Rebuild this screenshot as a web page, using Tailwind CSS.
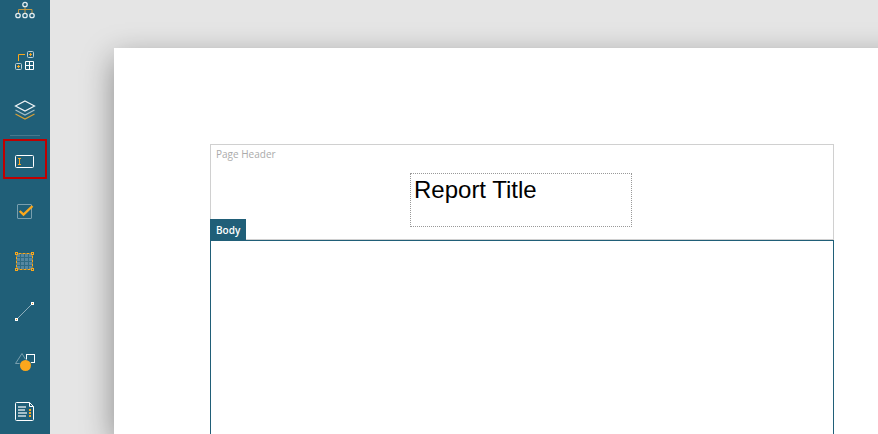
<!DOCTYPE html>
<html lang="en">
<head>
    <meta charset="UTF-8">
    <meta name="viewport" content="width=device-width, initial-scale=1.0">
    <title>Report Designer</title>
    <script src="https://cdn.jsdelivr.net/npm/@tailwindcss/browser@4"></script>
</head>
<body class="flex h-screen overflow-hidden bg-[#e5e5e5] font-['Open_Sans',sans-serif]">
    <!-- Toolbox, scrolled down slightly -->
    <nav aria-label="Toolbox" class="w-[50px] shrink-0 overflow-hidden bg-[#205f78]">
        <div class="-mt-[15px] flex flex-col">
            <button type="button" aria-label="Hierarchy" class="flex h-[50px] items-center justify-center">
                <svg class="size-6" viewBox="0 0 24 24" fill="none">
                    <path d="M12 9v6M5.500 15v-3.500h13.500v3.500" stroke="#c39a45"/>
                    <g stroke="#e3edf1" stroke-width="1.300">
                        <circle cx="12" cy="6.500" r="2.200"/>
                        <circle cx="5" cy="17.500" r="2.200"/>
                        <circle cx="12" cy="17.500" r="2.200"/>
                        <circle cx="19" cy="17.500" r="2.200"/>
                    </g>
                </svg>
            </button>
            <button type="button" aria-label="Tablix" class="flex h-[50px] items-center justify-center">
                <svg class="size-6" viewBox="0 0 24 24" fill="none">
                    <path d="M5.500 13V6.500H12" stroke="#faa71c"/>
                    <g stroke="#bcd0d8">
                        <rect x="14.500" y="3.500" width="6" height="6" rx="1"/>
                        <rect x="2.500" y="15.500" width="6" height="6" rx="1"/>
                    </g>
                    <path d="M16 6.500h3M17.500 5v3M4 18.500h3M5.500 17v3" stroke="#faa71c"/>
                    <path d="M12.500 13.500h8v8h-8zM16.500 13.500v8M12.500 17.500h8" stroke="#fff"/>
                </svg>
            </button>
            <button type="button" aria-label="Layers" class="flex h-[50px] items-center justify-center">
                <svg class="size-6" viewBox="0 0 24 24" fill="none" stroke-width="1.200">
                    <path d="M2.500 16l9.500 5 9.500-5" stroke="#d9a136"/>
                    <path d="M2.500 12l9.500 5 9.500-5" stroke="#a5bfca"/>
                    <path d="M12 3l9.500 5-9.500 5-9.500-5z" stroke="#f2f6f8"/>
                </svg>
            </button>
            <hr class="mx-[10px] border-t border-[#47798e]">
            <button type="button" aria-label="Text Box" class="relative flex h-[50px] items-center justify-center">
                <svg class="size-6" viewBox="0 0 24 24" fill="none">
                    <rect x="2.500" y="6.500" width="18" height="12" rx="1" stroke="#fff"/>
                    <path d="M5 9.500h3M6.500 9v7M5 15.500h3" stroke="#faa71c"/>
                </svg>
                <span class="absolute inset-x-[3px] top-[3px] bottom-[7px] border-2 border-[#c00000]"></span>
            </button>
            <button type="button" aria-label="Check Box" class="flex h-[50px] items-center justify-center">
                <svg class="size-6" viewBox="0 0 24 24" fill="none">
                    <rect x="4.500" y="5.500" width="14" height="14" rx="0.500" stroke="#799fae"/>
                    <path d="M6.700 12l3.800 3.600 9-8.600" stroke="#faa71c" stroke-width="2.400"/>
                </svg>
            </button>
            <button type="button" aria-label="Table" class="flex h-[50px] items-center justify-center">
                <svg class="size-6" viewBox="0 0 24 24" fill="none">
                    <rect x="4" y="5" width="15" height="15" fill="#5687a0"/>
                    <path d="M7.500 5v15M11.500 5v15M15.500 5v15M4 8.500h15M4 12.500h15M4 16.500h15" stroke="#2f6b83"/>
                    <rect x="3.500" y="4.500" width="16" height="16" stroke="#faa71c" stroke-dasharray="3 1" stroke-dashoffset="-2"/>
                    <g stroke="#faa71c" fill="#205f78">
                        <rect x="2.500" y="3.500" width="2" height="2"/>
                        <rect x="18.500" y="3.500" width="2" height="2"/>
                        <rect x="2.500" y="19.500" width="2" height="2"/>
                        <rect x="18.500" y="19.500" width="2" height="2"/>
                    </g>
                </svg>
            </button>
            <button type="button" aria-label="Line" class="flex h-[50px] items-center justify-center">
                <svg class="size-6" viewBox="0 0 24 24" fill="none">
                    <path d="M3.500 20.500l16-16" stroke="#90afbc"/>
                    <path d="M18 3h3v3h-3zM2 19h3v3h-3z" fill="#fff"/>
                    <path d="M19 4h1v1h-1zM3 20h1v1h-1z" fill="#e08a1c"/>
                </svg>
            </button>
            <button type="button" aria-label="Shape" class="flex h-[50px] items-center justify-center">
                <svg class="size-6" viewBox="0 0 24 24" fill="none">
                    <path d="M9 4.500l6 10H2.500z" stroke="#799fae"/>
                    <rect x="13.500" y="5.500" width="8" height="8" fill="#205f78" stroke="#fff"/>
                    <circle cx="12.500" cy="16.500" r="6.200" fill="#205f78"/>
                    <circle cx="12.500" cy="16.500" r="5.500" fill="#faa71c"/>
                </svg>
            </button>
            <button type="button" aria-label="Table of Contents" class="flex h-[50px] items-center justify-center">
                <svg class="size-6" viewBox="0 0 24 24" fill="none">
                    <path d="M16.500 3.500h-13q-1 0-1 1v16q0 1 1 1h16q1 0 1-1v-13zM16.500 3.500v4h4" stroke="#fff"/>
                    <path d="M5 8h8M5 11h7M5 14h9M5 17h8" stroke="#a5bfc9" stroke-width="2"/>
                    <path d="M16 10h2v2h-2zM16 13h2v2h-2zM16 16h2v2h-2z" fill="#faa71c"/>
                </svg>
            </button>
        </div>
    </nav>

    <!-- Design surface, the sheet runs off to the right -->
    <main class="flex flex-1 overflow-hidden pt-12 pl-16">
        <div class="-mr-13 flex flex-1 flex-col bg-white pt-24 pr-24 pl-24 shadow-[0_10px_30px_rgba(0,0,0,0.4)]">
            <section class="relative h-24 border border-[#d0d0d0] px-[5px] py-px">
                <h2 class="text-[10px] leading-4 text-[#ababab]">Page Header</h2>
                <div class="absolute top-7 left-[199px] h-[54px] w-[222px] border border-dotted border-[#999] px-[3px] font-['Liberation_Sans',Arial,sans-serif] text-2xl leading-8 text-black">Report Title</div>
            </section>
            <section class="relative flex-1 border border-b-0 border-[#205f78]">
                <h2 class="absolute bottom-full -left-px bg-[#205f78] px-[6px] text-[10px] leading-[22px] font-semibold text-white">Body</h2>
            </section>
        </div>
    </main>
</body>
</html>
